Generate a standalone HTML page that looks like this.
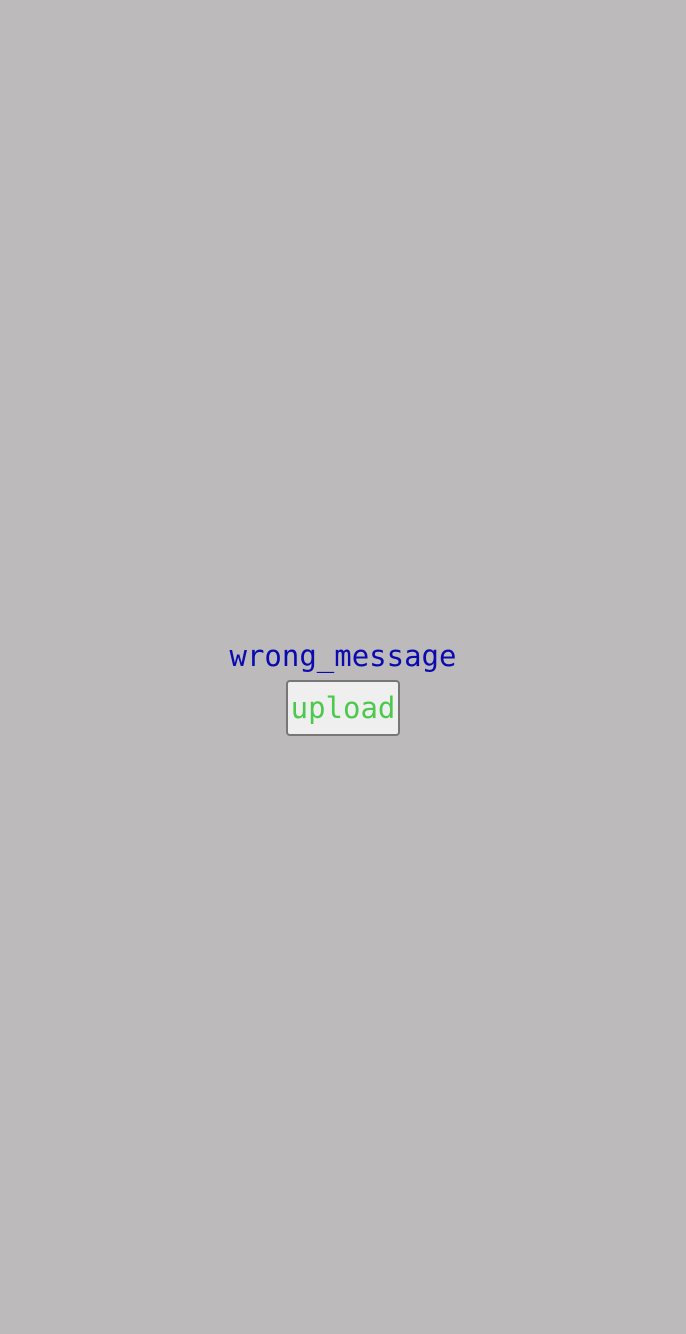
<!DOCTYPE html>
<html><head><style>
html,body{margin:0;padding:0;background:#bcbaba;width:686px;height:1334px;overflow:hidden}
.msg{position:absolute;left:0;width:686px;top:636px;text-align:center;font:29px "DejaVu Sans Mono",monospace;color:#0a0ab0;line-height:40px}
.btn{position:absolute;left:286px;top:680px;width:110px;height:52px;border:2px solid #777;border-radius:4px;background:#efefef;box-sizing:content-box;font:29px "DejaVu Sans Mono",monospace;color:#4cc94c;text-align:center;line-height:52px}
</style></head><body>
<div class="msg">wrong_message</div>
<div class="btn">upload</div>
</body></html>
